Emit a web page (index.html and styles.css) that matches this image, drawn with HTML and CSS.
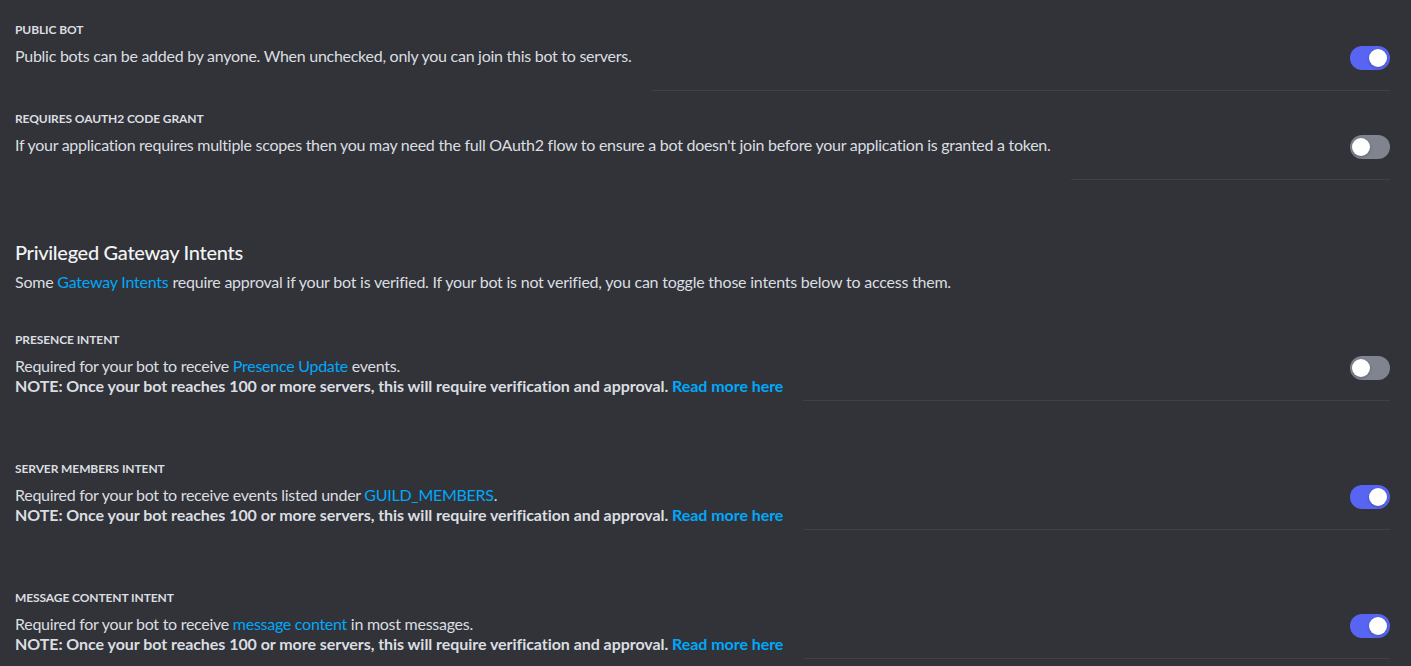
FILE: index.html
```html
<!DOCTYPE html>
<html>
<head>
<meta charset="utf-8">
<link rel="stylesheet" href="styles.css">
</head>
<body>
<main class="page">
  <section class="group">
    <div class="setting">
      <div class="setting-title">Public Bot</div>
      <div class="setting-row">
        <div class="setting-text">Public bots can be added by anyone. When unchecked, only you can join this bot to servers.</div>
        <div class="setting-control"><span class="switch on"><span class="knob"></span></span></div>
      </div>
    </div>
    <div class="setting">
      <div class="setting-title">Requires OAuth2 Code Grant</div>
      <div class="setting-row">
        <div class="setting-text">If your application requires multiple scopes then you may need the full OAuth2 flow to ensure a bot doesn't join before your application is granted a token.</div>
        <div class="setting-control"><span class="switch"><span class="knob"></span></span></div>
      </div>
    </div>
  </section>

  <section class="group intents">
    <h2 class="group-title">Privileged Gateway Intents</h2>
    <p class="group-desc">Some <a class="link">Gateway Intents</a> require approval if your bot is verified. If your bot is not verified, you can toggle those intents below to access them.</p>

    <div class="setting">
      <div class="setting-title">Presence Intent</div>
      <div class="setting-row">
        <div class="setting-text">Required for your bot to receive <a class="link">Presence Update</a> events.<br><strong>NOTE: Once your bot reaches 100 or more servers, this will require verification and approval. <a class="link">Read more here</a></strong></div>
        <div class="setting-control"><span class="switch"><span class="knob"></span></span></div>
      </div>
    </div>
    <div class="setting">
      <div class="setting-title">Server Members Intent</div>
      <div class="setting-row">
        <div class="setting-text">Required for your bot to receive events listed under <a class="link">GUILD_MEMBERS</a>.<br><strong>NOTE: Once your bot reaches 100 or more servers, this will require verification and approval. <a class="link">Read more here</a></strong></div>
        <div class="setting-control"><span class="switch on"><span class="knob"></span></span></div>
      </div>
    </div>
    <div class="setting">
      <div class="setting-title">Message Content Intent</div>
      <div class="setting-row">
        <div class="setting-text">Required for your bot to receive <a class="link">message content</a> in most messages.<br><strong>NOTE: Once your bot reaches 100 or more servers, this will require verification and approval. <a class="link">Read more here</a></strong></div>
        <div class="setting-control"><span class="switch on"><span class="knob"></span></span></div>
      </div>
    </div>
  </section>
</main>
</body>
</html>
```
FILE: styles.css
```css
html, body {
  margin: 0;
  padding: 0;
  background: #313338;
  height: 100%;
  overflow: hidden;
}
body {
  font-family: Lato, "Liberation Sans", sans-serif;
  color: #dbdee1;
}
.page {
  padding: 22px 21px 0 15px;
}
.group {
  margin: 0;
}
.intents {
  margin-top: 60px;
}
.setting {
  margin-bottom: 20px;
}
.intents .setting {
  margin-bottom: 60px;
}
.intents .setting:last-child {
  margin-bottom: 0;
}
.setting-title {
  font-size: 12px;
  line-height: 16px;
  font-weight: 700;
  text-transform: uppercase;
  color: #dbdee1;
  margin-bottom: 8px;
  letter-spacing: -0.1px;
}
.setting-row {
  display: flex;
  align-items: flex-start;
}
.setting-text {
  font-size: 16px;
  line-height: 20px;
  letter-spacing: -0.27px;
}
.setting-text strong {
  font-weight: 700;
  letter-spacing: -0.05px;
}
.setting-control {
  flex: 1;
  margin-left: 20px;
  display: flex;
  justify-content: flex-end;
  padding-bottom: 20px;
  border-bottom: 1px solid #3f4147;
}
.group-title {
  margin: 0 0 8px;
  font-size: 20px;
  line-height: 24px;
  font-weight: 500;
  color: #f2f3f5;
  letter-spacing: -0.3px;
}
.group-desc {
  margin: 0 0 40px;
  font-size: 16px;
  line-height: 20px;
  letter-spacing: -0.22px;
}
.link {
  color: #00a8fc;
  cursor: pointer;
}
.switch {
  position: relative;
  display: block;
  width: 40px;
  height: 24px;
  border-radius: 12px;
  background: #80848e;
}
.switch.on {
  background: #5865f2;
}
.knob {
  position: absolute;
  top: 3px;
  left: 2px;
  width: 18px;
  height: 18px;
  border-radius: 50%;
  background: #ffffff;
  box-shadow: 0 1px 3px rgba(0, 0, 0, 0.25);
}
.switch.on .knob {
  left: auto;
  right: 3px;
}
```
